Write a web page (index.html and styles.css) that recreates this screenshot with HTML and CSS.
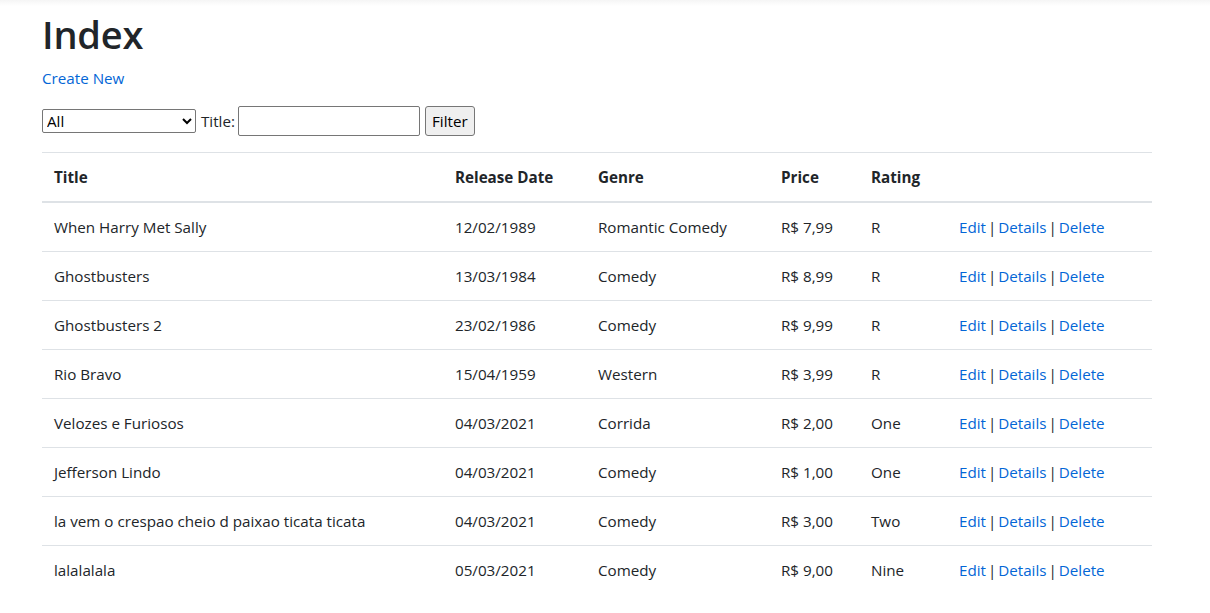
FILE: index.html
```html
<!DOCTYPE html>
<html lang="pt-BR">
<head>
<meta charset="utf-8">
<title>Index</title>
<link rel="stylesheet" href="styles.css">
</head>
<body>
<div class="topshade"></div>
<div class="container">
  <main class="main">
    <h1 class="page-title">Index</h1>
    <p class="create"><a href="#">Create New</a></p>
    <form class="filter">
      <select class="genre">
        <option>All</option>
        <option>Comedy</option>
        <option>Corrida</option>
        <option>Romantic Comedy</option>
        <option>Western</option>
      </select>
      <label class="title-label">Title:</label>
      <input class="title-input" type="text">
      <button class="btn" type="button">Filter</button>
    </form>
    <table class="table">
      <colgroup>
        <col class="c-title"><col class="c-date"><col class="c-genre"><col class="c-price"><col class="c-rating"><col class="c-actions">
      </colgroup>
      <thead>
        <tr><th>Title</th><th>Release Date</th><th>Genre</th><th>Price</th><th>Rating</th><th></th></tr>
      </thead>
      <tbody>
        <tr><td>When Harry Met Sally</td><td>12/02/1989</td><td>Romantic Comedy</td><td>R$ 7,99</td><td>R</td><td class="actions"><a href="#">Edit</a> | <a href="#">Details</a> | <a href="#">Delete</a></td></tr>
        <tr><td>Ghostbusters</td><td>13/03/1984</td><td>Comedy</td><td>R$ 8,99</td><td>R</td><td class="actions"><a href="#">Edit</a> | <a href="#">Details</a> | <a href="#">Delete</a></td></tr>
        <tr><td>Ghostbusters 2</td><td>23/02/1986</td><td>Comedy</td><td>R$ 9,99</td><td>R</td><td class="actions"><a href="#">Edit</a> | <a href="#">Details</a> | <a href="#">Delete</a></td></tr>
        <tr><td>Rio Bravo</td><td>15/04/1959</td><td>Western</td><td>R$ 3,99</td><td>R</td><td class="actions"><a href="#">Edit</a> | <a href="#">Details</a> | <a href="#">Delete</a></td></tr>
        <tr><td>Velozes e Furiosos</td><td>04/03/2021</td><td>Corrida</td><td>R$ 2,00</td><td>One</td><td class="actions"><a href="#">Edit</a> | <a href="#">Details</a> | <a href="#">Delete</a></td></tr>
        <tr><td>Jefferson Lindo</td><td>04/03/2021</td><td>Comedy</td><td>R$ 1,00</td><td>One</td><td class="actions"><a href="#">Edit</a> | <a href="#">Details</a> | <a href="#">Delete</a></td></tr>
        <tr><td>la vem o crespao cheio d paixao ticata ticata</td><td>04/03/2021</td><td>Comedy</td><td>R$ 3,00</td><td>Two</td><td class="actions"><a href="#">Edit</a> | <a href="#">Details</a> | <a href="#">Delete</a></td></tr>
        <tr><td>lalalalala</td><td>05/03/2021</td><td>Comedy</td><td>R$ 9,00</td><td>Nine</td><td class="actions"><a href="#">Edit</a> | <a href="#">Details</a> | <a href="#">Delete</a></td></tr>
      </tbody>
    </table>
  </main>
</div>
</body>
</html>
```
FILE: styles.css
```css
html, body { margin: 0; padding: 0; background: #fff; }
body {
  font-family: "Open Sans", "Noto Sans", sans-serif;
  font-size: 15.2px;
  line-height: 24px;
  color: #212529;
}
*, *::before, *::after { box-sizing: border-box; }

.topshade {
  height: 6px;
  background: linear-gradient(#f5f5f5, #ffffff);
}

.container {
  width: 1140px;
  margin-left: 27px;
  padding: 0 15px;
}

.main { padding-top: 4px; }

.page-title {
  margin: 0 0 8px;
  height: 48px;
  font-size: 38px;
  font-weight: 600;
  line-height: 48px;
  color: #212529;
  letter-spacing: -0.2px;
}

a { color: #0366d6; text-decoration: none; }

.create { margin: 0 0 16px; }

.filter {
  display: flex;
  align-items: center;
  height: 30px;
  margin: 0 0 16px;
}

.genre {
  width: 154px;
  height: 24px;
  margin: 0;
  font-family: inherit;
  font-size: 15.2px;
  color: #000;
  border: 1px solid #767676;
  border-radius: 2px;
  background: #fff;
  padding: 0;
}

.title-label { margin: 0 3px 0 5px; color: #212529; }

.title-input {
  width: 182px;
  height: 30px;
  margin: 0;
  border: 1px solid #767676;
  border-radius: 2px;
  font-family: inherit;
  font-size: 15.2px;
  padding: 1px 2px;
}

.btn {
  height: 30px;
  margin: 0 0 0 5px;
  padding: 1px 6px;
  font-family: inherit;
  font-size: 15.2px;
  color: #000;
  background: #efefef;
  border: 1px solid #767676;
  border-radius: 3px;
}

.table {
  width: 1110px;
  table-layout: fixed;
  border-collapse: collapse;
}
.c-title { width: 401px; }
.c-date { width: 143px; }
.c-genre { width: 183px; }
.c-price { width: 90px; }
.c-rating { width: 88px; }
.c-actions { width: 205px; }

.table th, .table td {
  padding: 12px;
  text-align: left;
  vertical-align: top;
  border-top: 1px solid #dee2e6;
  line-height: 24px;
  white-space: nowrap;
}
.table th {
  font-weight: 700;
  vertical-align: bottom;
  border-bottom: 2px solid #dee2e6;
}
.actions { word-spacing: -2px; }
```
